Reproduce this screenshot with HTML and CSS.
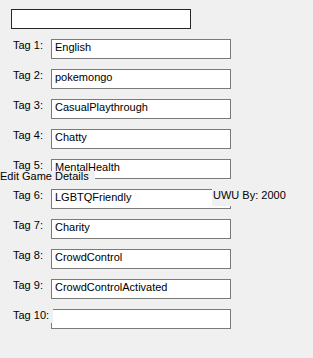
FILE: index.html
```html
<!DOCTYPE html>
<html>
<head>
<meta charset="utf-8">
<link rel="stylesheet" href="styles.css">
</head>
<body>
<div class="form">
  <div class="search"></div>
  <div class="rows">
    <div class="row"><span class="label">Tag 1:</span><div class="box">English</div></div>
    <div class="row"><span class="label">Tag 2:</span><div class="box">pokemongo</div></div>
    <div class="row"><span class="label">Tag 3:</span><div class="box">CasualPlaythrough</div></div>
    <div class="row"><span class="label">Tag 4:</span><div class="box">Chatty</div></div>
    <div class="row"><span class="label">Tag 5:</span><div class="box">MentalHealth</div></div>
    <div class="row"><span class="label">Tag 6:</span><div class="box">LGBTQFriendly</div></div>
    <div class="row"><span class="label">Tag 7:</span><div class="box">Charity</div></div>
    <div class="row"><span class="label">Tag 8:</span><div class="box">CrowdControl</div></div>
    <div class="row"><span class="label">Tag 9:</span><div class="box">CrowdControlActivated</div></div>
    <div class="row"><span class="label label-wide">Tag 10:</span><div class="box"></div></div>
  </div>
  <div class="caption">Edit Game Details</div>
  <div class="uwu">UWU By: 2000</div>
</div>
</body>
</html>
```
FILE: styles.css
```css
html, body {
  margin: 0;
  padding: 0;
  background: #f0f0f0;
}
body {
  width: 313px;
  height: 358px;
  overflow: hidden;
  font-family: "Liberation Sans", Arial, sans-serif;
  font-size: 11px;
  line-height: 13px;
  color: #000;
}
.form {
  position: relative;
  width: 313px;
  height: 358px;
  padding-top: 9px;
  box-sizing: border-box;
}
.search {
  margin-left: 11px;
  width: 180px;
  height: 20px;
  box-sizing: border-box;
  border: 1px solid #262626;
  background: #fff;
}
.rows {
  margin-top: 10px;
  margin-left: 13px;
  display: flex;
  flex-direction: column;
  gap: 10px;
}
.row {
  display: flex;
  align-items: flex-start;
  height: 20px;
}
.label {
  width: 38px;
  flex: none;
  white-space: nowrap;
}
.label-wide {
  width: 40px;
  margin-right: -2px;
  height: 14px;
  background: #f0f0f0;
  position: relative;
  z-index: 1;
}
.box {
  width: 180px;
  height: 20px;
  box-sizing: border-box;
  border: 1px solid #7a7a7a;
  background: #fff;
  padding: 1px 0 0 3px;
  color: #000;
  white-space: nowrap;
  overflow: hidden;
}
.caption {
  position: absolute;
  left: 0;
  top: 171px;
  width: 95px;
  height: 12px;
  line-height: 11px;
  background: #f0f0f0;
  white-space: nowrap;
  z-index: 2;
}
.uwu {
  position: absolute;
  left: 212px;
  top: 189px;
  padding: 0 2px 4px 1px;
  background: #f0f0f0;
  white-space: nowrap;
  z-index: 2;
}
```
